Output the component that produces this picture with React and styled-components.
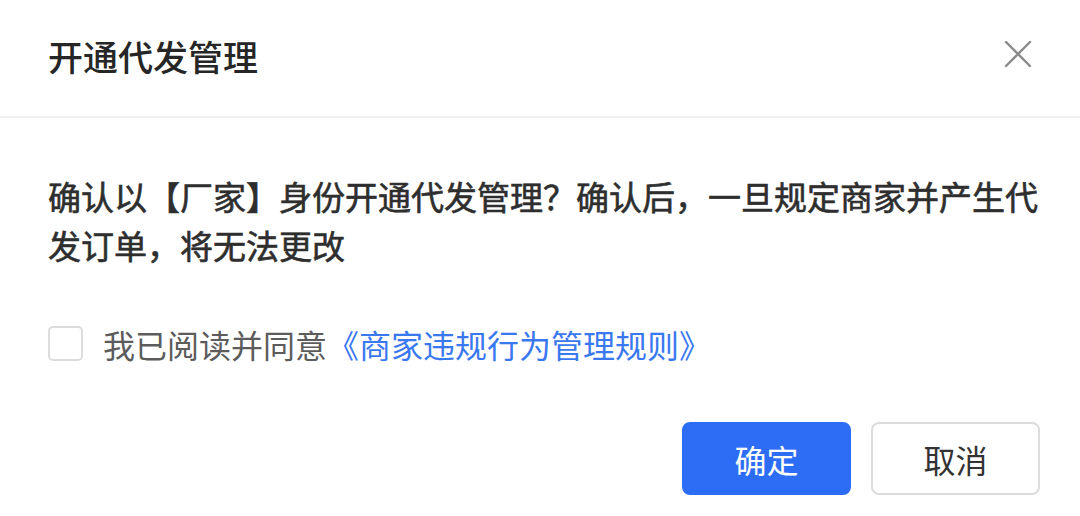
import React, { useState } from "react";
import styled, { createGlobalStyle } from "styled-components";

const GlobalStyle = createGlobalStyle`
    html, body {
        margin: 0;
        padding: 0;
        background: #ffffff;
    }
    body {
        font-family: "Noto Sans CJK SC", "Noto Sans", sans-serif;
    }
`;

const Dialog = styled.div`
    width: 1080px;
    height: 516px;
    background: #ffffff;
    display: flex;
    flex-direction: column;
    box-sizing: border-box;
`;

const Header = styled.div`
    height: 118px;
    display: flex;
    align-items: center;
    justify-content: space-between;
    padding: 0 44px 0 48px;
    border-bottom: 2px solid #f0f0f0;
    box-sizing: border-box;
`;

const Title = styled.div`
    font-size: 35px;
    font-weight: 500;
    color: #262626;
    line-height: 1;
    margin-top: -6px;
`;

const CloseButton = styled.button`
    width: 36px;
    height: 36px;
    padding: 0;
    border: none;
    background: none;
    display: flex;
    align-items: center;
    justify-content: center;
    cursor: pointer;
    margin-top: -8px;
`;

const Body = styled.div`
    padding: 54px 40px 0 48px;
    display: flex;
    flex-direction: column;
`;

const Message = styled.p`
    margin: 0;
    font-size: 33px;
    line-height: 49px;
    font-weight: 400;
    color: #2e2e2e;
    -webkit-text-stroke: 0.6px #2e2e2e;
`;

const AgreeRow = styled.label`
    margin-top: 56px;
    display: flex;
    align-items: center;
    gap: 20px;
    cursor: pointer;
`;

const Checkbox = styled.span`
    width: 35px;
    height: 35px;
    box-sizing: border-box;
    border: 2px solid ${props => (props.checked ? "#2d6cf5" : "#dcdcdc")};
    background: ${props => (props.checked ? "#2d6cf5" : "#ffffff")};
    border-radius: 5px;
    display: flex;
    align-items: center;
    justify-content: center;
`;

const AgreeText = styled.span`
    font-size: 32px;
    color: #5c5c5c;
    line-height: 1;
`;

const Link = styled.a`
    color: #3a78f0;
    text-decoration: none;
`;

const Footer = styled.div`
    margin-top: 61px;
    display: flex;
    justify-content: flex-end;
    gap: 20px;
`;

const Button = styled.button`
    width: 169px;
    height: 73px;
    border-radius: 8px;
    font-family: inherit;
    font-size: 32px;
    cursor: pointer;
    box-sizing: border-box;
    color: ${props => (props.primary ? "#ffffff" : "#333333")};
    background: ${props => (props.primary ? "#2d6cf5" : "#ffffff")};
    border: 2px solid ${props => (props.primary ? "#2d6cf5" : "#dcdcdc")};
`;

export default function App() {
    const [agreed, setAgreed] = useState(false);

    return (
        <>
            <GlobalStyle />
            <Dialog>
                <Header>
                    <Title>开通代发管理</Title>
                    <CloseButton aria-label="关闭">
                        <svg width="28" height="26" viewBox="0 0 28 26">
                            <path d="M2 1 L26 25 M26 1 L2 25" stroke="#8a8a8a" strokeWidth="2.4" strokeLinecap="round" />
                        </svg>
                    </CloseButton>
                </Header>
                <Body>
                    <Message>
                        确认以【厂家】身份开通代发管理？确认后，一旦规定商家并产生代发订单，将无法更改
                    </Message>
                    <AgreeRow onClick={() => setAgreed(!agreed)}>
                        <Checkbox checked={agreed}>
                            {agreed && (
                                <svg width="20" height="20" viewBox="0 0 20 20">
                                    <path d="M4 10 L8.5 14.5 L16 6" stroke="#fff" strokeWidth="2.6" fill="none" />
                                </svg>
                            )}
                        </Checkbox>
                        <AgreeText>
                            我已阅读并同意<Link>《商家违规行为管理规则》</Link>
                        </AgreeText>
                    </AgreeRow>
                    <Footer>
                        <Button primary>确定</Button>
                        <Button>取消</Button>
                    </Footer>
                </Body>
            </Dialog>
        </>
    );
}
